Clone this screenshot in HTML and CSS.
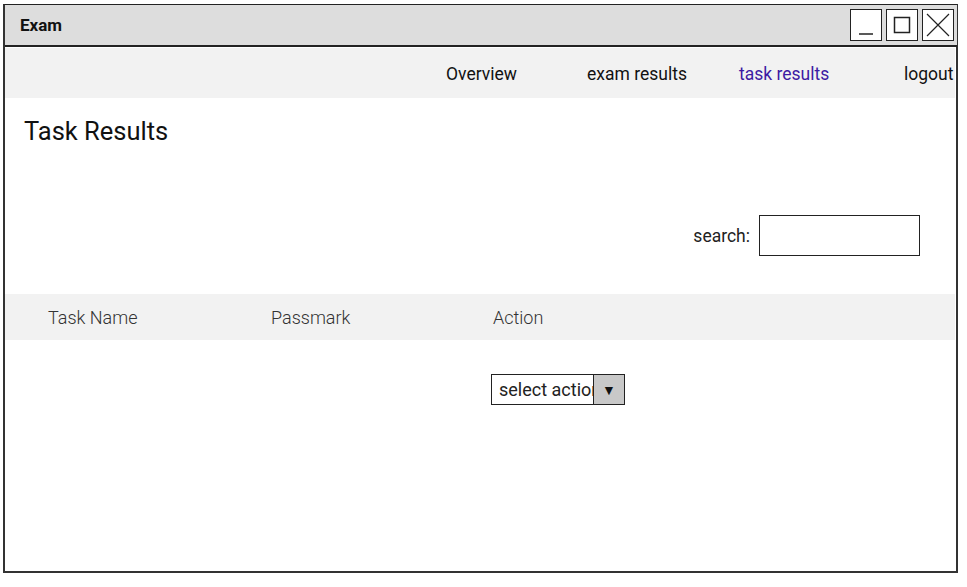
FILE: index.html
```html
<!DOCTYPE html>
<html>
<head>
<meta charset="utf-8">
<link rel="stylesheet" href="styles.css">
</head>
<body>
<div class="window">
  <div class="titlebar">
    <span class="title">Exam</span>
    <div class="wbtns">
      <div class="wbtn"><svg width="30" height="30" viewBox="0 0 30 30"><line x1="8" y1="24" x2="22" y2="24" stroke="#222" stroke-width="1.5"/></svg></div>
      <div class="wbtn"><svg width="30" height="30" viewBox="0 0 30 30"><rect x="7.5" y="7.5" width="15" height="15" fill="none" stroke="#222" stroke-width="1.5"/></svg></div>
      <div class="wbtn"><svg width="30" height="30" viewBox="0 0 30 30"><path d="M4 4 L26 26 M26 4 L4 26" stroke="#222" stroke-width="1.2"/></svg></div>
    </div>
  </div>
  <nav class="nav">
    <span class="nav-item">Overview</span>
    <span class="nav-item">exam results</span>
    <span class="nav-item active">task results</span>
    <span class="nav-item">logout</span>
  </nav>
  <main class="content">
    <h1 class="heading">Task Results</h1>
    <div class="search-row">
      <label class="search-label">search:</label>
      <div class="search-box"></div>
    </div>
    <div class="thead">
      <span class="th">Task Name</span>
      <span class="th">Passmark</span>
      <span class="th">Action</span>
    </div>
    <div class="trow">
      <div class="select">
        <span class="select-text">select action</span>
        <span class="select-arrow">▼</span>
      </div>
    </div>
  </main>
</div>
</body>
</html>
```
FILE: styles.css
```css
* { box-sizing: border-box; }
html, body { margin: 0; padding: 0; background: #fff; }
body { font-family: Roboto, "Liberation Sans", sans-serif; color: #111; }
.window {
  margin: 4px 0 0 3px;
  width: 955px;
  height: 569px;
  border: 2px solid #333;
  border-top: 1px solid #222;
  display: flex;
  flex-direction: column;
}
.titlebar {
  height: 42px;
  background: #dddddd;
  border-bottom: 2px solid #222;
  display: flex;
  align-items: center;
  justify-content: space-between;
  padding: 0 3px 0 15px;
  margin-right: -1px;
}
.title { font-weight: bold; font-size: 17px; color: #111; }
.wbtns { display: flex; gap: 4px; align-items: center; }
.wbtn {
  width: 32px; height: 32px;
  background: #fff;
  border: 1px solid #222;
  display: flex; align-items: center; justify-content: center;
}
.nav {
  margin: 1px 1px 0 0;
  height: 50px;
  background: #f2f2f2;
  display: grid;
  grid-template-columns: 141px 152px 165px auto;
  align-items: center;
  padding-left: 441px;
  font-size: 17.5px;
  color: #111;
  white-space: nowrap;
  overflow: hidden;
}
.nav-item { padding-top: 2px; }
.nav-item.active { color: #3d1aa3; }
.content { padding: 0; display: flex; flex-direction: column; }
.heading {
  margin: 17px 0 0 19px;
  font-size: 25.5px;
  font-weight: 400;
  line-height: 32px;
  color: #111;
}
.search-row {
  margin-top: 68px;
  display: flex;
  align-items: center;
  justify-content: flex-end;
  padding-right: 36px;
  gap: 9px;
}
.search-label { font-size: 17.5px; color: #222; }
.search-box {
  width: 161px; height: 41px;
  border: 1.5px solid #222;
  background: #fff;
}
.thead {
  margin: 38px 1px 0 0;
  height: 46px;
  background: #f2f2f2;
  display: grid;
  grid-template-columns: 223px 222px auto;
  align-items: center;
  padding-left: 43px;
  font-size: 18px;
  font-weight: 300;
  color: #333;
}
.trow { padding: 34px 0 0 486px; }
.select {
  position: relative;
  width: 134px; height: 31px;
  border: 1.5px solid #222;
  display: flex; align-items: center;
  padding-left: 7px;
  font-size: 18px;
  font-weight: 400;
  color: #222;
  overflow: hidden;
  white-space: nowrap;
}
.select-text { position: relative; z-index: 1; }
.select-arrow {
  position: absolute;
  right: 0; top: 0; bottom: 0;
  width: 31px;
  background: #c8c8c8;
  border-left: 1.5px solid #222;
  font-size: 14px;
  color: #111;
  display: flex; align-items: center; justify-content: flex-start;
  padding-left: 8px;
  z-index: 2;
}
.select-arrow::before { content: none; }
```
